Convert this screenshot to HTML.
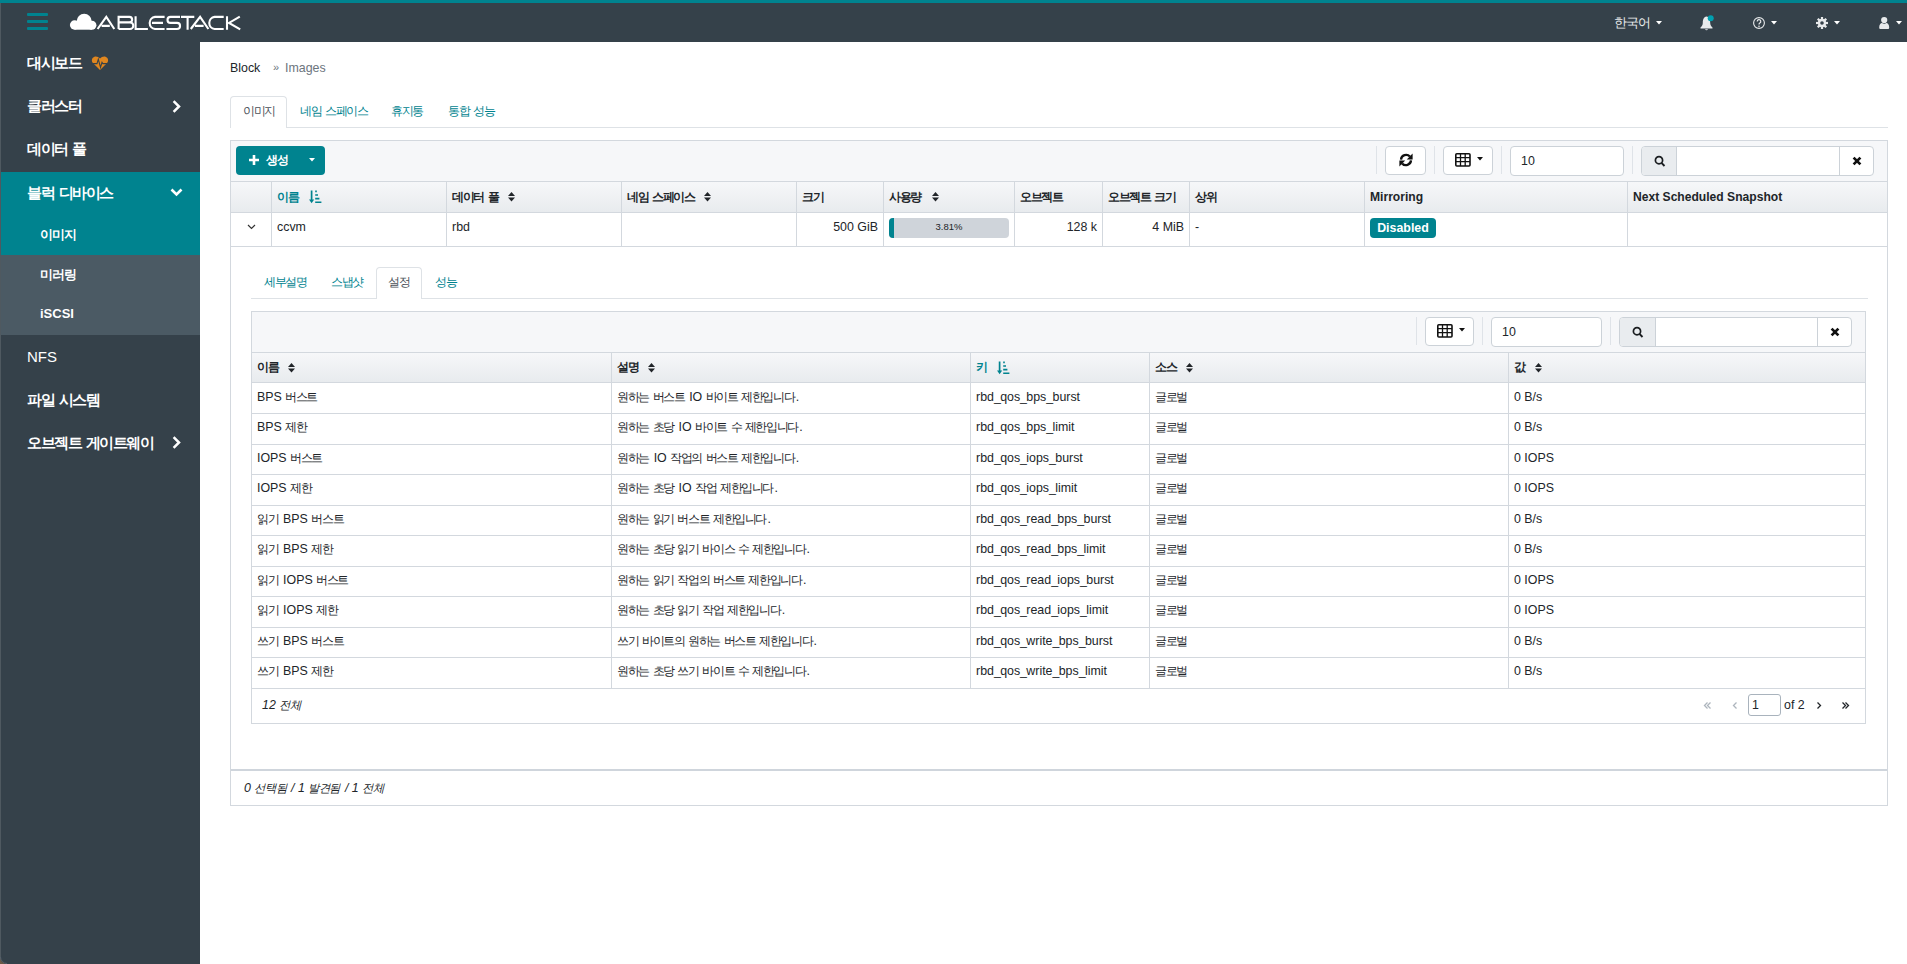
<!DOCTYPE html><html lang="ko"><head><meta charset="utf-8"><style>
*{box-sizing:border-box;margin:0;padding:0}
html,body{width:1907px;height:964px;overflow:hidden;background:#fff}
body{font-family:"Liberation Sans",sans-serif;font-size:12.4px;color:#212529;position:relative}
.k{font-size:0.93em;letter-spacing:-0.12em;word-spacing:0.16em;margin-right:0.12em}
.abs{position:absolute}
.u{letter-spacing:-0.7px}
.nav{left:0;top:0;width:1907px;height:42px;background:#35414a;border-top:3px solid #00838f}
.side{left:0;top:42px;width:200px;height:922px;background:#35414a}
.si{position:absolute;left:27px;color:#fff;font-size:15px;line-height:20px;white-space:nowrap}
.si .k{font-size:0.98em;letter-spacing:-0.1em;word-spacing:0.14em;font-weight:bold}
.sub .k,.lang .k{font-size:1em;letter-spacing:-0.08em}
.sub{position:absolute;left:40px;color:#fff;font-size:13px;line-height:20px;font-weight:bold}
.t{position:absolute;white-space:nowrap;line-height:16px}
.tbl{left:230px;top:140px;width:1658px;height:666px;border:1px solid #d3d8de;background:#fff}
.tb{background:#f6f7f9}
.hdr{background:linear-gradient(#f6f7f9,#e8ebee);border-top:1px solid #d3d8de;border-bottom:1px solid #d3d8de}
.vl{position:absolute;width:1px;background:#d3d8de}
.hl{position:absolute;height:1px;background:#d3d8de}
.btn{position:absolute;border:1px solid #ccd2d8;border-radius:4px;background:#fff}
.inp{position:absolute;border:1px solid #ccd2d8;border-radius:4px;background:#fff}
.sep{position:absolute;width:1px;background:#dfe3e8}
.th{font-weight:bold;color:#212529;font-size:12.1px}
.th .k{font-size:0.955em}
.teal{color:#00838f}
</style></head><body>
<div class="abs nav"></div>
<div class="abs" style="left:27px;top:13px;width:21px;height:3px;border-radius:1px;background:#00838f"></div>
<div class="abs" style="left:27px;top:20px;width:21px;height:3px;border-radius:1px;background:#00838f"></div>
<div class="abs" style="left:27px;top:27px;width:21px;height:3px;border-radius:1px;background:#00838f"></div>
<svg class="abs" style="left:60px;top:10px" width="190" height="24" viewBox="60 10 190 24">
<g fill="#fff"><circle cx="74.6" cy="25" r="4.7"/><circle cx="84.2" cy="21.3" r="7.5"/><circle cx="91.9" cy="25.2" r="4.5"/><rect x="74.6" y="24" width="17.3" height="5.7"/></g>
<g fill="none" stroke="#fff" stroke-width="2.1" stroke-linejoin="miter">
<path d="M97.6 29 L106.3 16.9 L114.3 29 M101.6 25.9 H109.8"/>
<path d="M118.6 29 V16.9 H129.4 A2.6 2.6 0 0 1 129.4 22.4 H118.6 M118.6 22.4 H130 A3.2 3.2 0 0 1 130 29 H118.6"/>
<path d="M135.6 16.2 V29 H147.9"/>
<path d="M164.6 16.9 H155 A6.1 6.1 0 0 0 155 29 H164.6 M152 22.9 H163"/>
<path d="M180 16.9 H170.5 A3 3 0 0 0 170.5 22.9 H177 A3 3 0 0 1 177 29 H166.4"/>
<path d="M181 16.9 H194.3 M187.6 16.9 V29.8"/>
<path d="M190.8 29 L200.1 16.9 L208.4 29 M195 25.9 H203.6"/>
<path d="M223.7 16.9 H214.6 A6.1 6.1 0 0 0 214.6 29 H223.7"/>
<path d="M227 16.2 V29.8 M239.8 16.6 L229 22.9 L240.2 29.4"/>
</g></svg>
<div class="t lang" style="left:1614px;top:15px;color:#eceeef;font-size:13px"><span class="k">한국어</span></div>
<svg class="abs" style="left:1656px;top:20.5px" width="6" height="4"><path d="M0 0H6L3 3.4Z" fill="#fff"/></svg>
<svg class="abs" style="left:1700px;top:15px" width="16" height="16" viewBox="0 0 16 16">
<path d="M6.5 1.5 C3.5 2 2.8 5 2.8 8 C2.8 10.5 1.5 11.5 0.5 12.5 V13.5 H12.5 V12.5 C11.5 11.5 10.2 10.5 10.2 8 C10.2 5 9.5 2 6.5 1.5Z" fill="#e8eaec"/>
<path d="M5 14.2 A1.6 1.6 0 0 0 8 14.2Z" fill="#e8eaec"/>
<circle cx="10.7" cy="3.3" r="3" fill="#00a0b0"/></svg>
<svg class="abs" style="left:1753px;top:16px" width="14" height="14" viewBox="0 0 14 14">
<circle cx="6" cy="7" r="5.4" fill="none" stroke="#e8eaec" stroke-width="1.1"/>
<path d="M4.2 5.4 A1.8 1.8 0 1 1 6.8 7 C6.2 7.3 6 7.7 6 8.6" fill="none" stroke="#e8eaec" stroke-width="1.2"/>
<circle cx="6" cy="10.2" r="0.8" fill="#e8eaec"/></svg>
<svg class="abs" style="left:1771px;top:20.5px" width="6" height="4"><path d="M0 0H6L3 3.4Z" fill="#fff"/></svg>
<svg class="abs" style="left:1816px;top:17px" width="12" height="12" viewBox="-6 -6 12 12">
<g fill="#e8eaec"><rect x="-1.1" y="-6" width="2.2" height="3" transform="rotate(0)"/><rect x="-1.1" y="-6" width="2.2" height="3" transform="rotate(45)"/><rect x="-1.1" y="-6" width="2.2" height="3" transform="rotate(90)"/><rect x="-1.1" y="-6" width="2.2" height="3" transform="rotate(135)"/><rect x="-1.1" y="-6" width="2.2" height="3" transform="rotate(180)"/><rect x="-1.1" y="-6" width="2.2" height="3" transform="rotate(225)"/><rect x="-1.1" y="-6" width="2.2" height="3" transform="rotate(270)"/><rect x="-1.1" y="-6" width="2.2" height="3" transform="rotate(315)"/>
<circle r="4.2"/></g><circle r="1.8" fill="#35414a"/></svg>
<svg class="abs" style="left:1834px;top:20.5px" width="6" height="4"><path d="M0 0H6L3 3.4Z" fill="#fff"/></svg>
<svg class="abs" style="left:1879px;top:16px" width="11" height="14" viewBox="0 0 11 14">
<circle cx="5.2" cy="4" r="3.1" fill="#e8eaec"/>
<path d="M0.2 11.4 C0.2 8.6 1.6 7.3 3 7.1 C4.2 7.8 6.2 7.8 7.4 7.1 C8.8 7.3 10.2 8.6 10.2 11.4 C10.2 12.6 9.6 13 8.8 13 H1.6 C0.8 13 0.2 12.6 0.2 11.4Z" fill="#e8eaec"/></svg>
<svg class="abs" style="left:1896px;top:20.5px" width="6" height="4"><path d="M0 0H6L3 3.4Z" fill="#fff"/></svg>
<div class="abs side"></div>
<div class="abs" style="left:0;top:172px;width:200px;height:83px;background:#00838f"></div>
<div class="abs" style="left:0;top:255px;width:200px;height:80px;background:#4b5a64"></div>
<div class="si" style="top:53px"><span class="k">대시보드</span></div>
<div class="si" style="top:95.5px"><span class="k">클러스터</span></div>
<div class="si" style="top:139px"><span class="k">데이터 풀</span></div>
<div class="si" style="top:183px"><span class="k">블럭 디바이스</span></div>
<div class="si" style="top:347px">NFS</div>
<div class="si" style="top:389.5px"><span class="k">파일 시스템</span></div>
<div class="si" style="top:432.5px"><span class="k">오브젝트 게이트웨이</span></div>
<div class="sub" style="top:225px"><span class="k">이미지</span></div>
<div class="sub" style="top:264.5px"><span class="k">미러링</span></div>
<div class="sub" style="top:304px">iSCSI</div>
<svg class="abs" style="left:172px;top:100px" width="10" height="13"><path d="M1.6 1.2 L7 6.5 L1.6 11.8" fill="none" stroke="#fff" stroke-width="2.5"/></svg>
<svg class="abs" style="left:172px;top:436px" width="10" height="13"><path d="M1.6 1.2 L7 6.5 L1.6 11.8" fill="none" stroke="#fff" stroke-width="2.5"/></svg>
<svg class="abs" style="left:170px;top:188px" width="13" height="9"><path d="M1.5 1.5 L6.5 6.5 L11.5 1.5" fill="none" stroke="#fff" stroke-width="2.6"/></svg>
<svg class="abs" style="left:91px;top:55px" width="18" height="16" viewBox="0 0 18 16">
<path d="M9 15 L2.2 8.3 C0.2 6.3 0.5 2.8 3.1 1.9 C5.3 1.1 7.5 2 9 3.6 C10.5 2 12.7 1.1 14.9 1.9 C17.5 2.8 17.8 6.3 15.8 8.3 Z" fill="#e0861f"/>
<path d="M0.5 8.6 H6 L7.3 4.2 L9.5 12.4 L11 7.3 L11.8 8.6 H17.5" fill="none" stroke="#35414a" stroke-width="1.1"/></svg>
<div class="abs" style="left:0;top:3px;width:1px;height:961px;background:#4f5960"></div>
<svg class="abs" style="left:0;top:957px" width="7" height="7"><path d="M0 0 V7 H7 A7 7 0 0 1 0 0Z" fill="#6b5a48"/><path d="M0.5 0 A6.5 6.5 0 0 0 7 6.5" fill="none" stroke="#56606a" stroke-width="1"/></svg>
<div class="t" style="left:230px;top:59.5px;color:#212529">Block</div>
<div class="t" style="left:273px;top:59px;color:#6c757d;font-size:11px">»</div>
<div class="t" style="left:285px;top:59.5px;color:#6c757d">Images</div>
<div class="hl" style="left:230px;top:127px;width:1658px;background:#dee2e6"></div>
<div class="abs" style="left:230px;top:96px;width:57px;height:32px;border:1px solid #dee2e6;border-bottom:none;border-radius:4px 4px 0 0;background:#fff"></div>
<div class="t" style="left:243px;top:103px;color:#495057"><span class="k">이미지</span></div>
<div class="t teal" style="left:300px;top:103px"><span class="k">네임 스페이스</span></div>
<div class="t teal" style="left:391px;top:103px"><span class="k">휴지통</span></div>
<div class="t teal" style="left:448px;top:103px"><span class="k">통합 성능</span></div>
<div class="abs tbl"></div>
<div class="abs tb" style="left:231px;top:141px;width:1656px;height:40px"></div>
<div class="abs" style="left:236px;top:146px;width:89px;height:29px;border-radius:4px;background:#00838f"></div>
<svg class="abs" style="left:249px;top:155px" width="10" height="10"><path d="M5 0V10M0 5H10" stroke="#fff" stroke-width="2.6"/></svg>
<div class="t" style="left:266px;top:152px;color:#fff;font-weight:bold"><span class="k">생성</span></div>
<svg class="abs" style="left:309px;top:158px" width="6" height="4"><path d="M0 0H6L3 3.4Z" fill="#fff"/></svg>
<div class="sep" style="left:1376px;top:146px;height:28px"></div>
<div class="sep" style="left:1434px;top:146px;height:28px"></div>
<div class="sep" style="left:1501px;top:146px;height:28px"></div>
<div class="sep" style="left:1632px;top:146px;height:28px"></div>
<div class="btn" style="left:1385px;top:146px;width:41px;height:29px"></div>
<svg class="abs" style="left:1398.5px;top:153px" width="14" height="14" viewBox="0 0 14 14">
<path d="M2 6.6 A5.1 5.1 0 0 1 10.9 3.6" fill="none" stroke="#111" stroke-width="2.3"/><path d="M13.6 0.6 V6.4 H7.8Z" fill="#111"/>
<path d="M12 7.4 A5.1 5.1 0 0 1 3.1 10.4" fill="none" stroke="#111" stroke-width="2.3"/><path d="M0.4 13.4 V7.6 H6.2Z" fill="#111"/></svg>
<div class="btn" style="left:1443px;top:146px;width:50px;height:29px"></div>
<svg class="abs" style="left:1455px;top:153px" width="16" height="14" viewBox="0 0 16 14">
<rect x="0.8" y="0.8" width="14.2" height="12.2" rx="1" fill="none" stroke="#111" stroke-width="1.6"/>
<path d="M0.8 4.6H15M0.8 8.7H15M5.5 0.8V13M10.2 0.8V13" stroke="#111" stroke-width="1.3"/></svg>
<svg class="abs" style="left:1477px;top:157px" width="6" height="4"><path d="M0 0H6L3 3.4Z" fill="#111"/></svg>
<div class="inp" style="left:1510px;top:146px;width:114px;height:30px"></div>
<div class="t" style="left:1521px;top:153px;color:#212529">10</div>
<div class="inp" style="left:1641px;top:146px;width:233px;height:30px;overflow:hidden"><div style="position:absolute;left:0;top:0;width:35px;height:28px;background:#e9ecef;border-right:1px solid #ccd2d8"></div><div style="position:absolute;left:197px;top:0;width:1px;height:28px;background:#ccd2d8"></div></div>
<svg class="abs" style="left:1653.9px;top:155px" width="12" height="13" viewBox="0 0 12 13">
<circle cx="5" cy="5.2" r="3.6" fill="none" stroke="#1a1d20" stroke-width="1.7"/><path d="M7.5 7.9 L10.5 11" stroke="#1a1d20" stroke-width="1.9"/></svg>
<svg class="abs" style="left:1851.5px;top:156px" width="10" height="10" viewBox="0 0 10 10">
<path d="M1.6 1.6 L8.4 8.4 M8.4 1.6 L1.6 8.4" stroke="#111" stroke-width="2.7"/></svg>
<div class="abs hdr" style="left:231px;top:181px;width:1656px;height:32px"></div>
<div class="hl" style="left:231px;top:246px;width:1656px"></div>
<div class="vl" style="left:271px;top:181px;height:65px"></div>
<div class="vl" style="left:446px;top:181px;height:65px"></div>
<div class="vl" style="left:621px;top:181px;height:65px"></div>
<div class="vl" style="left:796px;top:181px;height:65px"></div>
<div class="vl" style="left:883px;top:181px;height:65px"></div>
<div class="vl" style="left:1014px;top:181px;height:65px"></div>
<div class="vl" style="left:1102px;top:181px;height:65px"></div>
<div class="vl" style="left:1189px;top:181px;height:65px"></div>
<div class="vl" style="left:1364px;top:181px;height:65px"></div>
<div class="vl" style="left:1627px;top:181px;height:65px"></div>
<div class="t th teal" style="left:277px;top:189px"><span class="k">이름</span></div>
<div class="t th " style="left:452px;top:189px"><span class="k">데이터 풀</span></div>
<div class="t th " style="left:627px;top:189px"><span class="k">네임 스페이스</span></div>
<div class="t th " style="left:802px;top:189px"><span class="k">크기</span></div>
<div class="t th " style="left:889px;top:189px"><span class="k">사용량</span></div>
<div class="t th " style="left:1020px;top:189px"><span class="k">오브젝트</span></div>
<div class="t th " style="left:1108px;top:189px"><span class="k">오브젝트 크기</span></div>
<div class="t th " style="left:1195px;top:189px"><span class="k">상위</span></div>
<div class="t th " style="left:1370px;top:189px">Mirroring</div>
<div class="t th " style="left:1633px;top:189px">Next Scheduled Snapshot</div>
<svg class="abs" style="left:309px;top:190px" width="13" height="14" viewBox="0 0 13 14">
<path d="M2.6 0.5V10.5" stroke="#00838f" stroke-width="1.7"/><path d="M0 9.6 H5.2 L2.6 13.2Z" fill="#00838f"/>
<path d="M6.2 1.4H7.8M6.2 5H9M6.2 8.6H10.4M6.2 12.2H12.4" stroke="#00838f" stroke-width="1.6"/></svg>
<svg class="abs" style="left:508px;top:192px" width="7" height="10" viewBox="0 0 7 10"><path d="M3.5 0 L7 4 H0Z M0 5.4 H7 L3.5 9.4Z" fill="#212529"/></svg>
<svg class="abs" style="left:704px;top:192px" width="7" height="10" viewBox="0 0 7 10"><path d="M3.5 0 L7 4 H0Z M0 5.4 H7 L3.5 9.4Z" fill="#212529"/></svg>
<svg class="abs" style="left:932px;top:192px" width="7" height="10" viewBox="0 0 7 10"><path d="M3.5 0 L7 4 H0Z M0 5.4 H7 L3.5 9.4Z" fill="#212529"/></svg>
<svg class="abs" style="left:247px;top:224px" width="9" height="6"><path d="M1 1 L4.5 4.5 L8 1" fill="none" stroke="#333" stroke-width="1.2"/></svg>
<div class="t" style="left:277px;top:219px">ccvm</div>
<div class="t" style="left:452px;top:219px">rbd</div>
<div class="t" style="left:796px;top:219px;width:82px;text-align:right">500 GiB</div>
<div class="abs" style="left:889px;top:218px;width:120px;height:20px;border-radius:4px;background:#cfd4da;overflow:hidden"><div style="width:5px;height:20px;background:#00838f"></div></div>
<div class="t" style="left:889px;top:219px;width:120px;text-align:center;font-size:9.5px">3.81%</div>
<div class="t" style="left:1014px;top:219px;width:83px;text-align:right">128 k</div>
<div class="t" style="left:1102px;top:219px;width:82px;text-align:right">4 MiB</div>
<div class="t" style="left:1195px;top:219px">-</div>
<div class="abs" style="left:1370px;top:218px;width:66px;height:20px;border-radius:4px;background:#00838f"></div>
<div class="t" style="left:1370px;top:220px;width:66px;text-align:center;color:#fff;font-weight:bold">Disabled</div>
<div class="hl" style="left:251px;top:298px;width:1617px;background:#dee2e6"></div>
<div class="abs" style="left:376px;top:267px;width:46px;height:32px;border:1px solid #dee2e6;border-bottom:none;border-radius:4px 4px 0 0;background:#fff"></div>
<div class="t teal" style="left:264px;top:274px"><span class="k">세부설명</span></div>
<div class="t teal" style="left:331px;top:274px"><span class="k">스냅샷</span></div>
<div class="t" style="left:388px;top:274px;color:#495057"><span class="k">설정</span></div>
<div class="t teal" style="left:435px;top:274px"><span class="k">성능</span></div>
<div class="abs" style="left:251px;top:311px;width:1615px;height:413px;border:1px solid #d3d8de;background:#fff"></div>
<div class="abs tb" style="left:252px;top:312px;width:1613px;height:40px"></div>
<div class="sep" style="left:1416px;top:317px;height:28px"></div>
<div class="sep" style="left:1482px;top:317px;height:28px"></div>
<div class="sep" style="left:1610px;top:317px;height:28px"></div>
<div class="btn" style="left:1425px;top:317px;width:49px;height:29px"></div>
<svg class="abs" style="left:1437px;top:324px" width="16" height="14" viewBox="0 0 16 14">
<rect x="0.8" y="0.8" width="14.2" height="12.2" rx="1" fill="none" stroke="#111" stroke-width="1.6"/>
<path d="M0.8 4.6H15M0.8 8.7H15M5.5 0.8V13M10.2 0.8V13" stroke="#111" stroke-width="1.3"/></svg>
<svg class="abs" style="left:1459px;top:328px" width="6" height="4"><path d="M0 0H6L3 3.4Z" fill="#111"/></svg>
<div class="inp" style="left:1491px;top:317px;width:111px;height:30px"></div>
<div class="t" style="left:1502px;top:324px;color:#212529">10</div>
<div class="inp" style="left:1619px;top:317px;width:233px;height:30px;overflow:hidden"><div style="position:absolute;left:0;top:0;width:36px;height:28px;background:#e9ecef;border-right:1px solid #ccd2d8"></div><div style="position:absolute;left:197px;top:0;width:1px;height:28px;background:#ccd2d8"></div></div>
<svg class="abs" style="left:1632.4px;top:326px" width="12" height="13" viewBox="0 0 12 13">
<circle cx="5" cy="5.2" r="3.6" fill="none" stroke="#1a1d20" stroke-width="1.7"/><path d="M7.5 7.9 L10.5 11" stroke="#1a1d20" stroke-width="1.9"/></svg>
<svg class="abs" style="left:1829.5px;top:327px" width="10" height="10" viewBox="0 0 10 10">
<path d="M1.6 1.6 L8.4 8.4 M8.4 1.6 L1.6 8.4" stroke="#111" stroke-width="2.7"/></svg>
<div class="abs hdr" style="left:252px;top:352px;width:1613px;height:31px"></div>
<div class="t th " style="left:257px;top:359px"><span class="k">이름</span></div>
<div class="t th " style="left:617px;top:359px"><span class="k">설명</span></div>
<div class="t th teal" style="left:976px;top:359px"><span class="k">키</span></div>
<div class="t th " style="left:1155px;top:359px"><span class="k">소스</span></div>
<div class="t th " style="left:1514px;top:359px"><span class="k">값</span></div>
<svg class="abs" style="left:288px;top:363px" width="7" height="10" viewBox="0 0 7 10"><path d="M3.5 0 L7 4 H0Z M0 5.4 H7 L3.5 9.4Z" fill="#212529"/></svg>
<svg class="abs" style="left:648px;top:363px" width="7" height="10" viewBox="0 0 7 10"><path d="M3.5 0 L7 4 H0Z M0 5.4 H7 L3.5 9.4Z" fill="#212529"/></svg>
<svg class="abs" style="left:997px;top:361px" width="13" height="14" viewBox="0 0 13 14">
<path d="M2.6 0.5V10.5" stroke="#00838f" stroke-width="1.7"/><path d="M0 9.6 H5.2 L2.6 13.2Z" fill="#00838f"/>
<path d="M6.2 1.4H7.8M6.2 5H9M6.2 8.6H10.4M6.2 12.2H12.4" stroke="#00838f" stroke-width="1.6"/></svg>
<svg class="abs" style="left:1186px;top:363px" width="7" height="10" viewBox="0 0 7 10"><path d="M3.5 0 L7 4 H0Z M0 5.4 H7 L3.5 9.4Z" fill="#212529"/></svg>
<svg class="abs" style="left:1535px;top:363px" width="7" height="10" viewBox="0 0 7 10"><path d="M3.5 0 L7 4 H0Z M0 5.4 H7 L3.5 9.4Z" fill="#212529"/></svg>
<div class="hl" style="left:252px;top:413.0px;width:1613px"></div>
<div class="t" style="left:257px;top:388.7px">BPS <span class="k">버스트</span></div>
<div class="t" style="left:617px;top:388.7px"><span class="k">원하는 버스트</span> IO <span class="k">바이트 제한입니다</span>.</div>
<div class="t" style="left:976px;top:388.7px">rbd<span class="u">_</span>qos<span class="u">_</span>bps<span class="u">_</span>burst</div>
<div class="t" style="left:1155px;top:388.7px"><span class="k">글로벌</span></div>
<div class="t" style="left:1514px;top:388.7px">0 B/s</div>
<div class="hl" style="left:252px;top:443.5px;width:1613px"></div>
<div class="t" style="left:257px;top:419.2px">BPS <span class="k">제한</span></div>
<div class="t" style="left:617px;top:419.2px"><span class="k">원하는 초당</span> IO <span class="k">바이트 수 제한입니다</span>.</div>
<div class="t" style="left:976px;top:419.2px">rbd<span class="u">_</span>qos<span class="u">_</span>bps<span class="u">_</span>limit</div>
<div class="t" style="left:1155px;top:419.2px"><span class="k">글로벌</span></div>
<div class="t" style="left:1514px;top:419.2px">0 B/s</div>
<div class="hl" style="left:252px;top:474.0px;width:1613px"></div>
<div class="t" style="left:257px;top:449.7px">IOPS <span class="k">버스트</span></div>
<div class="t" style="left:617px;top:449.7px"><span class="k">원하는</span> IO <span class="k">작업의 버스트 제한입니다</span>.</div>
<div class="t" style="left:976px;top:449.7px">rbd<span class="u">_</span>qos<span class="u">_</span>iops<span class="u">_</span>burst</div>
<div class="t" style="left:1155px;top:449.7px"><span class="k">글로벌</span></div>
<div class="t" style="left:1514px;top:449.7px">0 IOPS</div>
<div class="hl" style="left:252px;top:504.5px;width:1613px"></div>
<div class="t" style="left:257px;top:480.2px">IOPS <span class="k">제한</span></div>
<div class="t" style="left:617px;top:480.2px"><span class="k">원하는 초당</span> IO <span class="k">작업 제한입니다</span>.</div>
<div class="t" style="left:976px;top:480.2px">rbd<span class="u">_</span>qos<span class="u">_</span>iops<span class="u">_</span>limit</div>
<div class="t" style="left:1155px;top:480.2px"><span class="k">글로벌</span></div>
<div class="t" style="left:1514px;top:480.2px">0 IOPS</div>
<div class="hl" style="left:252px;top:535.0px;width:1613px"></div>
<div class="t" style="left:257px;top:510.7px"><span class="k">읽기</span> BPS <span class="k">버스트</span></div>
<div class="t" style="left:617px;top:510.7px"><span class="k">원하는 읽기 버스트 제한입니다</span>.</div>
<div class="t" style="left:976px;top:510.7px">rbd<span class="u">_</span>qos<span class="u">_</span>read<span class="u">_</span>bps<span class="u">_</span>burst</div>
<div class="t" style="left:1155px;top:510.7px"><span class="k">글로벌</span></div>
<div class="t" style="left:1514px;top:510.7px">0 B/s</div>
<div class="hl" style="left:252px;top:565.5px;width:1613px"></div>
<div class="t" style="left:257px;top:541.2px"><span class="k">읽기</span> BPS <span class="k">제한</span></div>
<div class="t" style="left:617px;top:541.2px"><span class="k">원하는 초당 읽기 바이스 수 제한입니다</span>.</div>
<div class="t" style="left:976px;top:541.2px">rbd<span class="u">_</span>qos<span class="u">_</span>read<span class="u">_</span>bps<span class="u">_</span>limit</div>
<div class="t" style="left:1155px;top:541.2px"><span class="k">글로벌</span></div>
<div class="t" style="left:1514px;top:541.2px">0 B/s</div>
<div class="hl" style="left:252px;top:596.0px;width:1613px"></div>
<div class="t" style="left:257px;top:571.7px"><span class="k">읽기</span> IOPS <span class="k">버스트</span></div>
<div class="t" style="left:617px;top:571.7px"><span class="k">원하는 읽기 작업의 버스트 제한입니다</span>.</div>
<div class="t" style="left:976px;top:571.7px">rbd<span class="u">_</span>qos<span class="u">_</span>read<span class="u">_</span>iops<span class="u">_</span>burst</div>
<div class="t" style="left:1155px;top:571.7px"><span class="k">글로벌</span></div>
<div class="t" style="left:1514px;top:571.7px">0 IOPS</div>
<div class="hl" style="left:252px;top:626.5px;width:1613px"></div>
<div class="t" style="left:257px;top:602.2px"><span class="k">읽기</span> IOPS <span class="k">제한</span></div>
<div class="t" style="left:617px;top:602.2px"><span class="k">원하는 초당 읽기 작업 제한입니다</span>.</div>
<div class="t" style="left:976px;top:602.2px">rbd<span class="u">_</span>qos<span class="u">_</span>read<span class="u">_</span>iops<span class="u">_</span>limit</div>
<div class="t" style="left:1155px;top:602.2px"><span class="k">글로벌</span></div>
<div class="t" style="left:1514px;top:602.2px">0 IOPS</div>
<div class="hl" style="left:252px;top:657.0px;width:1613px"></div>
<div class="t" style="left:257px;top:632.7px"><span class="k">쓰기</span> BPS <span class="k">버스트</span></div>
<div class="t" style="left:617px;top:632.7px"><span class="k">쓰기 바이트의 원하는 버스트 제한입니다</span>.</div>
<div class="t" style="left:976px;top:632.7px">rbd<span class="u">_</span>qos<span class="u">_</span>write<span class="u">_</span>bps<span class="u">_</span>burst</div>
<div class="t" style="left:1155px;top:632.7px"><span class="k">글로벌</span></div>
<div class="t" style="left:1514px;top:632.7px">0 B/s</div>
<div class="hl" style="left:252px;top:687.5px;width:1613px"></div>
<div class="t" style="left:257px;top:663.2px"><span class="k">쓰기</span> BPS <span class="k">제한</span></div>
<div class="t" style="left:617px;top:663.2px"><span class="k">원하는 초당 쓰기 바이트 수 제한입니다</span>.</div>
<div class="t" style="left:976px;top:663.2px">rbd<span class="u">_</span>qos<span class="u">_</span>write<span class="u">_</span>bps<span class="u">_</span>limit</div>
<div class="t" style="left:1155px;top:663.2px"><span class="k">글로벌</span></div>
<div class="t" style="left:1514px;top:663.2px">0 B/s</div>
<div class="vl" style="left:611px;top:352px;height:336px"></div>
<div class="vl" style="left:970px;top:352px;height:336px"></div>
<div class="vl" style="left:1149px;top:352px;height:336px"></div>
<div class="vl" style="left:1508px;top:352px;height:336px"></div>
<div class="t" style="left:262px;top:697px;font-style:italic">12 <span class="k">전체</span></div>
<svg class="abs" style="left:1700.5px;top:701.5px" width="10" height="7" viewBox="-2.5 0 10 7"><path d="M4 0.5 L1 3.5 L4 6.5" fill="none" stroke="#adb5bd" stroke-width="1.3"/><path d="M7 0.5 L4 3.5 L7 6.5" fill="none" stroke="#adb5bd" stroke-width="1.3" transform="translate(0,0)"/></svg>
<svg class="abs" style="left:1729.5px;top:701.5px" width="10" height="7" viewBox="-2.5 0 10 7"><path d="M4 0.5 L1 3.5 L4 6.5" fill="none" stroke="#adb5bd" stroke-width="1.3"/></svg>
<svg class="abs" style="left:1813.5px;top:701.5px" width="10" height="7" viewBox="-2.5 0 10 7"><path d="M1 0.5 L4 3.5 L1 6.5" fill="none" stroke="#212529" stroke-width="1.3"/></svg>
<svg class="abs" style="left:1842px;top:701.5px" width="10" height="7" viewBox="-2.5 0 10 7"><path d="M1 0.5 L4 3.5 L1 6.5" fill="none" stroke="#212529" stroke-width="1.3"/><path d="M-2 0.5 L1 3.5 L-2 6.5" fill="none" stroke="#212529" stroke-width="1.3" transform="translate(0,0)"/></svg>
<div class="inp" style="left:1748px;top:694px;width:33px;height:22px;border-color:#a9b3bd;border-radius:3px"></div>
<div class="t" style="left:1752px;top:697px">1</div>
<div class="t" style="left:1784px;top:697px">of 2</div>
<div class="hl" style="left:231px;top:769px;width:1656px;height:2px;background:#cfd5dc"></div>
<div class="t" style="left:244px;top:780px;font-style:italic">0 <span class="k">선택됨</span> / 1 <span class="k">발견됨</span> / 1 <span class="k">전체</span></div>
</body></html>
